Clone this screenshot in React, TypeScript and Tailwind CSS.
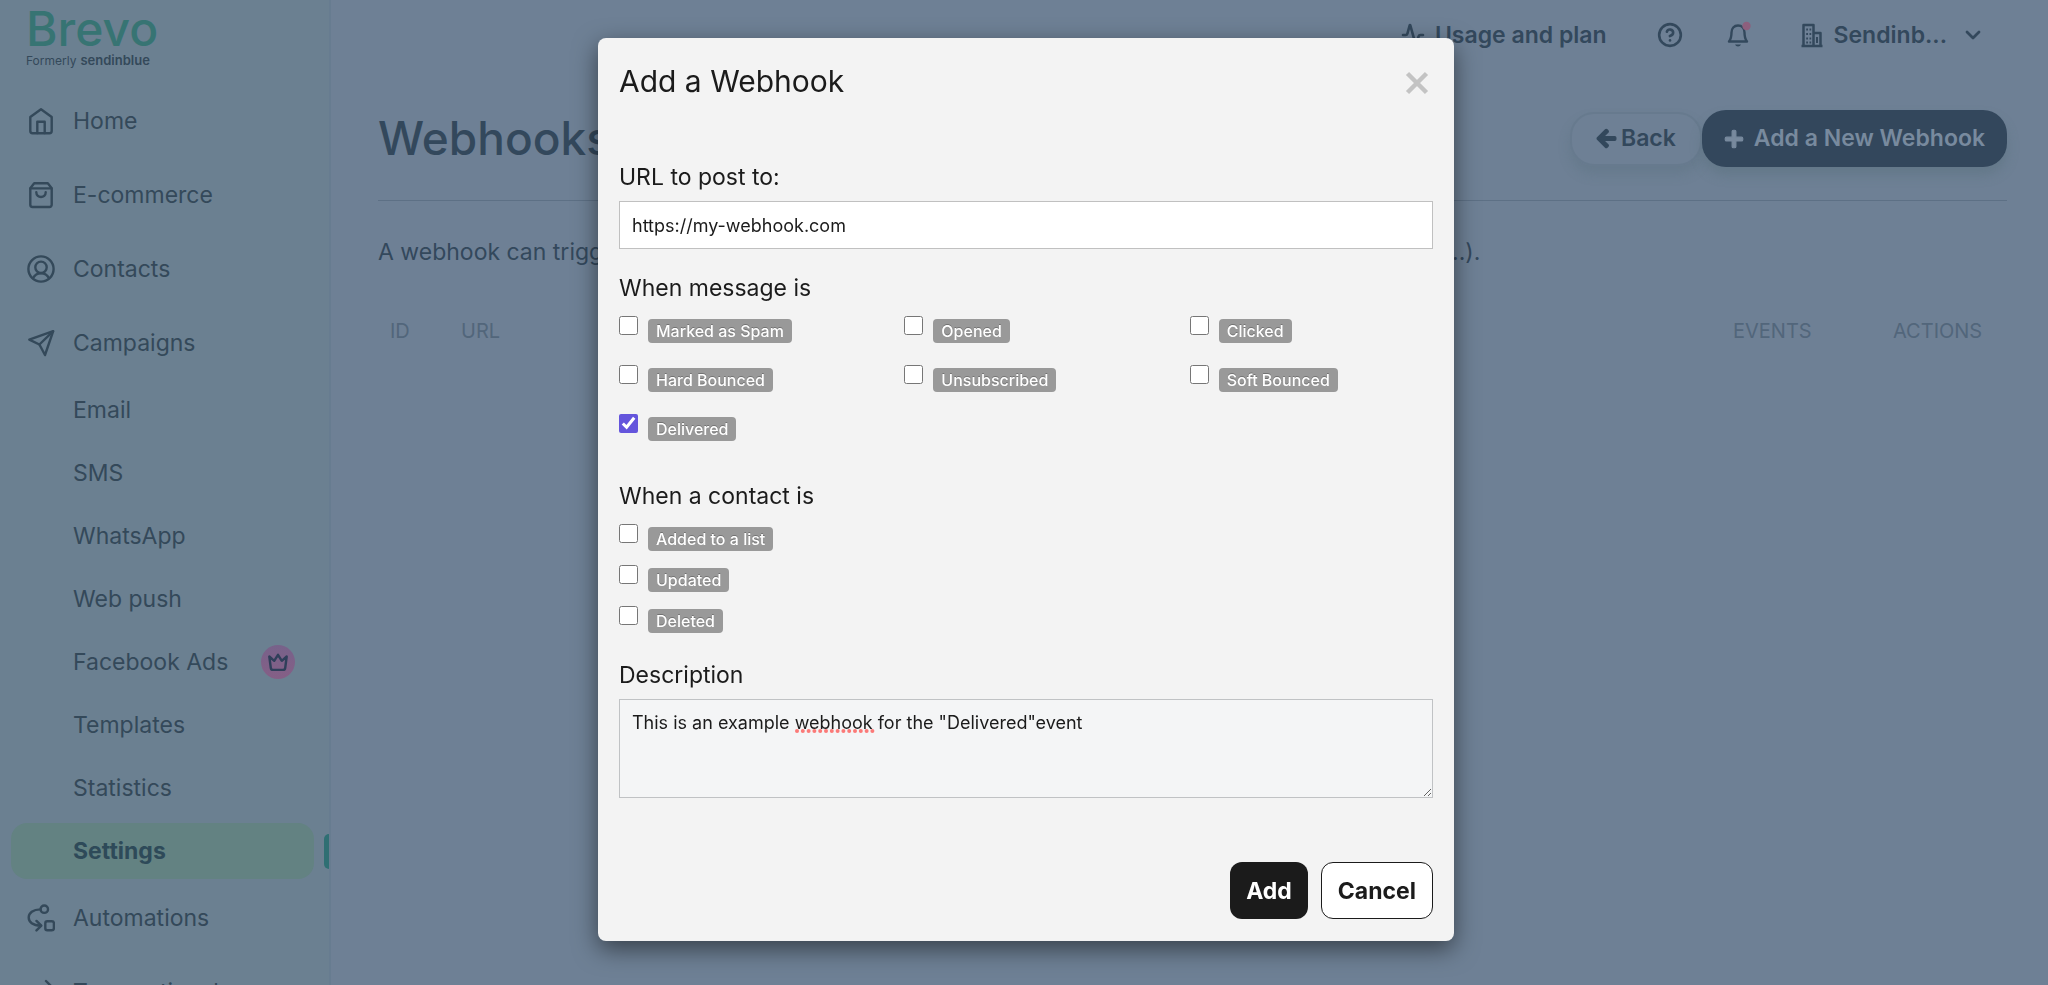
import React from "react";
import { Activity, ChevronDown, CircleHelp } from "lucide-react";
import { FaArrowLeft, FaPlus } from "react-icons/fa";

function NavIcon({ children }: { children: React.ReactNode }) {
  return (
    <svg
      viewBox="0 0 28 28"
      className="size-7 shrink-0"
      fill="none"
      stroke="currentColor"
      strokeWidth="2.4"
      strokeLinecap="round"
      strokeLinejoin="round"
      aria-hidden="true"
    >
      {children}
    </svg>
  );
}

const homeIcon = (
  <NavIcon>
    <path d="M3.3 10 14 2.3 24.7 10v14a2.2 2.2 0 0 1-2.2 2.2h-17A2.2 2.2 0 0 1 3.3 24z" />
    <path d="M10.3 26V14.7h7.4V26" />
  </NavIcon>
);
const bagIcon = (
  <NavIcon>
    <path d="M7.2 2.2h13.6l3.9 5v16.6a2.2 2.2 0 0 1-2.2 2.2h-17a2.2 2.2 0 0 1-2.2-2.2V7.2z" />
    <path d="M3.5 7.4h21M9.3 11.3c0 6.2 9.4 6.2 9.4 0" />
  </NavIcon>
);
const contactIcon = (
  <NavIcon>
    <circle cx="14" cy="14" r="12.6" />
    <circle cx="14" cy="12.3" r="5.7" />
    <path d="M6 23.2c1.7-3.4 4.6-5 8-5s6.3 1.6 8 5" />
  </NavIcon>
);
const planeIcon = (
  <NavIcon>
    <path d="M2.3 10.6 26.2 2.2 18 26l-5.6-10.5z" />
    <path d="M12.4 15.5 26 2.4" />
  </NavIcon>
);
const automationIcon = (
  <NavIcon>
    <circle cx="17.3" cy="5.2" r="3.7" />
    <rect x="18.3" y="17.3" width="8.6" height="9" rx="2" />
    <path d="M13.4 5.4C6 5.4 1.7 9 1.7 13.6c0 4.5 4 8 12 8" />
    <path d="M9.5 16.9 14.3 21.6 9.5 26.4" />
  </NavIcon>
);
const transactionalIcon = (
  <NavIcon>
    <path d="M2 9h23M19 3l6 6-6 6M26 19H3M9 13l-6 6 6 6" />
  </NavIcon>
);

function NavLink({ icon, label }: { icon: React.ReactNode; label: string }) {
  return (
    <a href="#" className="flex h-[74px] shrink-0 items-center gap-[18px] pl-[27px]">
      {icon}
      <span>{label}</span>
    </a>
  );
}

const subItems = ["Email", "SMS", "WhatsApp", "Web push", "Facebook Ads", "Templates", "Statistics"];

function PremiumBadge() {
  return (
    <span className="flex size-[34px] items-center justify-center rounded-full bg-linear-to-b from-[#77628a] to-[#855f86] text-[#2f3f5a]">
      <svg viewBox="0 0 22 22" className="size-[22px]" fill="none" stroke="currentColor" strokeWidth="2.4" strokeLinejoin="round" aria-hidden="true">
        <path d="M2.3 5.5 3.8 17a2.2 2.2 0 0 0 2.2 1.9h10a2.2 2.2 0 0 0 2.2-1.9L19.7 5.5l-4.9 4.3L11 3.8 7.200 9.800z" />
      </svg>
    </span>
  );
}

function Sidebar() {
  return (
    <aside className="flex w-[331px] shrink-0 flex-col overflow-hidden border-r-2 border-[#677c90] bg-[#6b8091] text-[23px] leading-8 text-[#34495a]">
      <a href="#" className="flex h-[84px] shrink-0 flex-col pl-[26px]">
        <span className="mt-1 text-[48px] leading-[50px] font-medium text-[#377473]">Brevo</span>
        <span className="flex items-baseline gap-1 text-xs leading-3">
          Formerly <span className="text-[13px] font-semibold">sendinblue</span>
        </span>
      </a>
      <nav className="flex flex-col">
        <NavLink icon={homeIcon} label="Home" />
        <NavLink icon={bagIcon} label="E-commerce" />
        <NavLink icon={contactIcon} label="Contacts" />
        <NavLink icon={planeIcon} label="Campaigns" />
        <div className="my-0.5 flex flex-col gap-[7px]">
          {subItems.map((s) => (
            <a key={s} href="#" className="flex h-14 items-center justify-between pr-[34px] pl-[73px]">
              {s}
              {s === "Facebook Ads" && <PremiumBadge />}
            </a>
          ))}
          <div className="flex items-center justify-between">
            <a
              href="#"
              aria-current="page"
              className="ml-[11px] flex h-14 w-[303px] items-center rounded-2xl bg-[#638282] pl-[62px] font-bold text-[#2e4a59]"
            >
              Settings
            </a>
            <span className="h-[35px] w-[5px] rounded-l-full bg-[#2f6f73]" />
          </div>
        </div>
        <NavLink icon={automationIcon} label="Automations" />
        <NavLink icon={transactionalIcon} label="Transactional" />
      </nav>
    </aside>
  );
}

function TopBar() {
  return (
    <header className="flex h-[70px] items-center justify-end pr-[63px] text-[23px] font-semibold">
      <a href="#" className="flex items-center gap-2.5">
        <Activity className="size-6" strokeWidth={2.6} />
        Usage and plan
      </a>
      <button type="button" aria-label="Help" className="ml-[50px]">
        <CircleHelp className="size-[26px]" strokeWidth={2.4} />
      </button>
      <button type="button" aria-label="Notifications" className="ml-[42px]">
        <svg viewBox="0 0 26 28" className="h-7 w-[26px]" fill="none" stroke="currentColor" strokeWidth="2.4" strokeLinejoin="round">
          <path d="M4 20.5h18c-2-2.5-2.5-4-2.5-9 0-4-2.5-7-6.5-7s-6.5 3-6.5 7c0 5-.5 6.5-2.5 9z" />
          <path d="M10 23.5a3.2 3.2 0 0 0 6 0z" fill="currentColor" stroke="none" />
          <circle cx="21.5" cy="5" r="4.2" fill="#8d5f7d" stroke="none" />
        </svg>
      </button>
      <button type="button" className="ml-[49px] flex items-center">
        <svg viewBox="0 0 24 28" className="h-7 w-6" fill="none" stroke="currentColor" strokeWidth="2.5" strokeLinejoin="round">
          <path d="M3.5 25V4h10v21M13.5 12h7v13M1.5 25h21" />
          <path d="M6.2 8.5H8M9.5 8.5h1.7M6.2 13H8M9.5 13h1.7M6.2 17.5H8M9.5 17.5h1.7M6.2 21.5H8M9.5 21.5h1.7M17 16v6" strokeWidth="2" />
        </svg>
        <span className="ml-2.5">Sendinb...</span>
        <ChevronDown className="ml-3.5 size-6" strokeWidth={2.8} />
      </button>
    </header>
  );
}

function WebhooksPage() {
  return (
    <main className="min-w-0 flex-1 bg-[#6e8095] text-[#33485c]">
      <TopBar />
      <div className="mr-[41px] ml-[47px]">
        <div className="flex h-[131px] items-start justify-between border-b border-[#5d7085] pt-10">
          <h1 className="text-[46px] leading-[57px] font-medium">Webhooks</h1>
          <div className="flex items-center text-[23px] font-semibold">
            <a
              href="#"
              className="flex h-[54px] items-center gap-1 rounded-3xl border-2 border-[#677a8e] px-6 shadow-[0_8px_12px_rgba(80,105,115,0.25)]"
            >
              <FaArrowLeft className="size-[21px]" stroke="currentColor" strokeWidth="40" />
              Back
            </a>
            <button
              type="button"
              className="flex h-[57px] items-center gap-2.5 rounded-3xl bg-[#33475c] px-[22px] text-[#788a9e] shadow-[0_8px_12px_rgba(80,105,115,0.35)]"
            >
              <FaPlus className="size-5" stroke="currentColor" strokeWidth="30" />
              Add a New Webhook
            </button>
          </div>
        </div>
        <p className="mt-[31px] overflow-hidden text-[23px] leading-10 whitespace-nowrap">
          A webhook can trigger a notification to the URL of your choice each time an event occurs (opened...).
        </p>
        <table className="mt-8 w-full table-fixed text-left text-xl leading-[54px] text-[#52667b]">
          <thead>
            <tr>
              <th className="w-[71px] pl-3 font-normal">ID</th>
              <th className="pl-3 font-normal">URL</th>
              <th className="w-[160px] font-normal">EVENTS</th>
              <th className="w-[114px] font-normal">ACTIONS</th>
            </tr>
          </thead>
        </table>
      </div>
    </main>
  );
}

function EventCheck({ label, checked = false }: { label: string; checked?: boolean }) {
  return (
    <label className="flex items-start gap-2.5">
      <input type="checkbox" defaultChecked={checked} className="size-[19px] accent-[#6455dc]" />
      <span className="mt-[3px] rounded-[4px] bg-[#999999] px-2 text-base leading-6 font-medium text-white [text-shadow:0_-1px_0_rgba(0,0,0,0.25)]">
        {label}
      </span>
    </label>
  );
}

const messageEvents = ["Marked as Spam", "Opened", "Clicked", "Hard Bounced", "Unsubscribed", "Soft Bounced", "Delivered"];
const contactEvents = ["Added to a list", "Updated", "Deleted"];

function SpellingMark() {
  return (
    <svg className="pointer-events-none absolute top-[30px] left-[176px] h-1 w-20" viewBox="0 0 80 4" aria-hidden="true">
      {Array.from({ length: 14 }, (_, i) => (
        <circle key={i} cx={2 + i * 5.8} cy="2" r="2" fill="#fb7a78" />
      ))}
    </svg>
  );
}

function WebhookDialog() {
  return (
    <div className="fixed inset-0 flex items-start justify-center overflow-auto pt-[38px] pl-1">
      <form
        role="dialog"
        aria-modal="true"
        aria-labelledby="dialog-title"
        className="w-[856px] max-w-full rounded-lg bg-[#f3f3f3] px-[21px] pb-[22px] text-[23px] leading-8 text-[#1b1b1b] shadow-[0_8px_24px_rgba(0,0,0,0.5)]"
      >
        <div className="flex h-[86px] items-center justify-between pr-1">
          <h2 id="dialog-title" className="text-[30px] leading-10">
            Add a Webhook
          </h2>
          <button type="button" aria-label="Close" className="pt-1 text-[#c3c3c3]">
            <svg viewBox="0 0 24 24" className="size-6" stroke="currentColor" strokeWidth="4.5">
              <path d="M2.5 2.5l19 19M21.5 2.5l-19 19" />
            </svg>
          </button>
        </div>

        <label htmlFor="url" className="mt-[37px] block">
          URL to post to:
        </label>
        <input
          id="url"
          type="text"
          defaultValue="https://my-webhook.com"
          className="mt-2 block h-12 w-full border border-[#c0c0c0] bg-white px-3 text-lg"
        />

        <fieldset className="mt-[23px]">
          <legend className="block">When message is</legend>
          <div className="mt-3 -mr-[42px] grid grid-cols-3 gap-y-[22px]">
            {messageEvents.map((e) => (
              <EventCheck key={e} label={e} checked={e === "Delivered"} />
            ))}
          </div>
        </fieldset>

        <fieldset className="mt-[39px]">
          <legend className="block">When a contact is</legend>
          <div className="mt-3 grid gap-y-[14px]">
            {contactEvents.map((e) => (
              <EventCheck key={e} label={e} />
            ))}
          </div>
        </fieldset>

        <label htmlFor="description" className="mt-[26px] block">
          Description
        </label>
        <div className="relative mt-2">
          <textarea
            id="description"
            spellCheck={false}
            defaultValue={'This is an example webhook for the "Delivered"event'}
            className="block h-[99px] w-full resize border border-[#c0c2c4] bg-[#f4f5f6] px-3 py-[9px] text-lg leading-7"
          />
          <SpellingMark />
        </div>

        <div className="mt-16 flex justify-end gap-[13px] font-bold">
          <button type="submit" className="h-[57px] rounded-xl bg-[#1b1b1b] px-4 text-white">
            Add
          </button>
          <button type="button" className="h-[57px] rounded-xl border border-[#1b1b1b] bg-white px-4">
            Cancel
          </button>
        </div>
      </form>
    </div>
  );
}

export default function App() {
  return (
    <div className="flex h-screen overflow-hidden font-['Inter',sans-serif]">
      <Sidebar />
      <WebhooksPage />
      <WebhookDialog />
    </div>
  );
}
